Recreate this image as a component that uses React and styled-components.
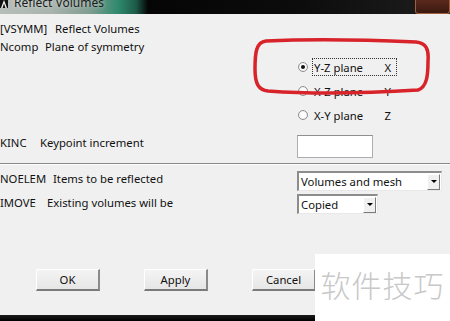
import React from "react";
import styled, { createGlobalStyle } from "styled-components";

const Global = createGlobalStyle`
  html, body { margin: 0; padding: 0; background: #f0f0f0; }
  * { box-sizing: border-box; }
`;

const Window = styled.div`
  position: relative;
  width: 450px;
  height: 321px;
  overflow: hidden;
  background: #f0f0f0;
  display: flex;
  flex-direction: column;
  font-family: "Noto Sans", "DejaVu Sans", sans-serif;
  font-size: 11.3px;
  color: #111;
`;

const TitleBar = styled.div`
  height: 14px;
  flex: none;
  display: flex;
  align-items: flex-start;
  overflow: hidden;
  background: linear-gradient(
    90deg,
    #b8beba 0px,
    #a9b4ae 50px,
    #7f9c90 90px,
    #2f8a6c 118px,
    #1d5a48 136px,
    #050505 148px,
    #0c0c0c 300px,
    #1a1a1a 414px
  );
`;

const TitleIcon = styled.svg`
  width: 8px;
  height: 8px;
  flex: none;
  margin-right: 6px;
`;

const TitleText = styled.span`
  font-family: "Noto Sans", sans-serif;
  font-size: 12px;
  line-height: 12px;
  margin-top: -3px;
  color: #1c1c1c;
  text-shadow: 0 0 4px rgba(255, 255, 255, 0.7);
`;

const CloseBox = styled.div`
  margin-left: auto;
  width: 35px;
  height: 14px;
  border: 1px solid #a0603c;
  border-top: none;
  border-radius: 0 0 3px 3px;
  background: linear-gradient(180deg, #5a2a1c, #3a1810);
`;

const Body = styled.div`
  flex: 1;
  display: flex;
  flex-direction: column;
  padding-top: 6px;
`;

const Field = styled.div`
  display: grid;
  grid-template-columns: 297px 1fr;
  align-items: start;
  margin-top: ${(p) => p.$mt || 0}px;
`;

const Label = styled.div`
  display: flex;
  line-height: ${(p) => p.$lh || 18}px;
  white-space: nowrap;
`;

const Code = styled.span`
  display: inline-block;
  min-width: ${(p) => p.$w}px;
`;

const RadioGroup = styled.div`
  margin-top: 17px;
  display: flex;
  flex-direction: column;
`;

const RadioRow = styled.div`
  height: 24px;
  display: flex;
  align-items: center;
  padding-left: 1px;
`;

const RadioDot = styled.span`
  width: 10px;
  height: 10px;
  border-radius: 50%;
  border: 1px solid #8f8f8f;
  background: radial-gradient(circle, #ffffff 40%, #e4e4e4 100%);
  display: flex;
  align-items: center;
  justify-content: center;
  margin-right: 4px;
  &::after {
    content: "";
    width: 4px;
    height: 4px;
    border-radius: 50%;
    background: ${(p) => (p.$on ? "#111" : "transparent")};
  }
`;

const RadioLabel = styled.span`
  width: 85px;
  height: 18px;
  display: flex;
  align-items: center;
  justify-content: space-between;
  padding: 0 5px 0 1px;
  border: 1px dotted ${(p) => (p.$focus ? "#333" : "transparent")};
`;

const TextBox = styled.div`
  width: 76px;
  height: 23px;
  background: #fff;
  border: 1px solid #abadb3;
  border-top-color: #8e8f8f;
`;

const Separator = styled.div`
  margin-top: 5px;
  height: 2px;
  border-top: 1px solid #8a8a8a;
  border-bottom: 1px solid #fdfdfd;
`;

const Select = styled.div`
  width: ${(p) => p.$w}px;
  height: 20px;
  display: flex;
  align-items: center;
  background: #fff;
  border-style: solid;
  border-width: 2px 1px 1px 2px;
  border-color: #8c8c8c #e8e8e8 #e8e8e8 #8c8c8c;
  padding-left: 2px;
`;

const SelectText = styled.span`
  flex: 1;
`;

const ArrowBtn = styled.span`
  width: 13px;
  height: 16px;
  margin-right: 1px;
  display: flex;
  align-items: center;
  justify-content: center;
  background: #f0f0f0;
  border-style: solid;
  border-width: 1px;
  border-color: #ffffff #7a7a7a #7a7a7a #ffffff;
  &::after {
    content: "";
    border-left: 3px solid transparent;
    border-right: 3px solid transparent;
    border-top: 3px solid #000;
  }
`;

const ButtonRow = styled.div`
  margin-top: auto;
  margin-bottom: 24px;
  display: flex;
  gap: 44px;
  padding-left: 36px;
`;

const Button = styled.div`
  width: 64px;
  height: 22px;
  display: flex;
  align-items: center;
  justify-content: center;
  background: linear-gradient(180deg, #f4f4f4, #e6e6e6);
  border-style: solid;
  border-width: 1px 2px 2px 1px;
  border-color: #ffffff #8a8a8a #7a7a7a #ffffff;
`;

const BottomBar = styled.div`
  height: 6px;
  flex: none;
  background: linear-gradient(180deg, #1c1c1c, #000);
`;

const Marker = styled.svg`
  position: absolute;
  left: 250px;
  top: 37px;
  width: 182px;
  height: 60px;
  pointer-events: none;
`;

const Watermark = styled.div`
  position: absolute;
  left: 315px;
  top: 254px;
  right: 0;
  bottom: 0;
  background: #ffffff;
  display: flex;
  align-items: center;
  justify-content: center;
  font-family: "Noto Sans CJK SC", sans-serif;
  font-weight: 300;
  font-size: 30px;
  color: #c8c8c8;
  letter-spacing: 1px;
  padding-bottom: 8px;
`;

function Radio({ on, focus, name, axis }) {
  return (
    <RadioRow>
      <RadioDot $on={on} />
      <RadioLabel $focus={focus}>
        <span>{name}</span>
        <span>{axis}</span>
      </RadioLabel>
    </RadioRow>
  );
}

export default function App() {
  return (
    <>
      <Global />
      <Window>
        <TitleBar>
          <TitleIcon viewBox="0 0 8 8">
            <rect width="8" height="8" fill="#111" />
            <path d="M1 8 L4 0 L7 8 L5.5 8 L4 3.5 L2.5 8 Z" fill="#f4f4f4" />
          </TitleIcon>
          <TitleText>Reflect Volumes</TitleText>
          <CloseBox />
        </TitleBar>
        <Body>
          <Label>
            <Code $w={55}>[VSYMM]</Code>
            <span>Reflect Volumes</span>
          </Label>
          <Field>
            <Label>
              <Code $w={45}>Ncomp</Code>
              <span>Plane of symmetry</span>
            </Label>
            <RadioGroup>
              <Radio on focus name="Y-Z plane" axis="X" />
              <Radio name="X-Z plane" axis="Y" />
              <Radio name="X-Y plane" axis="Z" />
            </RadioGroup>
          </Field>
          <Field $mt={8}>
            <Label $lh={16}>
              <Code $w={40}>KINC</Code>
              <span>Keypoint increment</span>
            </Label>
            <TextBox />
          </Field>
          <Separator />
          <Field $mt={6}>
            <Label $lh={16}>
              <Code $w={53}>NOELEM</Code>
              <span>Items to be reflected</span>
            </Label>
            <Select $w={145}>
              <SelectText>Volumes and mesh</SelectText>
              <ArrowBtn />
            </Select>
          </Field>
          <Field $mt={3}>
            <Label $lh={18}>
              <Code $w={47}>IMOVE</Code>
              <span>Existing volumes will be</span>
            </Label>
            <Select $w={81}>
              <SelectText>Copied</SelectText>
              <ArrowBtn />
            </Select>
          </Field>
          <ButtonRow>
            <Button>OK</Button>
            <Button>Apply</Button>
            <Button>Cancel</Button>
          </ButtonRow>
        </Body>
        <BottomBar />
        <Marker viewBox="0 0 182 60">
          <path
            d="M16 4 C60 2 120 3 166 5 C176 6 179 12 178 24 C178 38 177 50 168 53 C120 56 60 57 18 54 C8 53 5 46 5 32 C5 16 6 5 16 4 Z"
            fill="none"
            stroke="#d8232b"
            strokeWidth="3.5"
          />
        </Marker>
        <Watermark>软件技巧</Watermark>
      </Window>
    </>
  );
}
